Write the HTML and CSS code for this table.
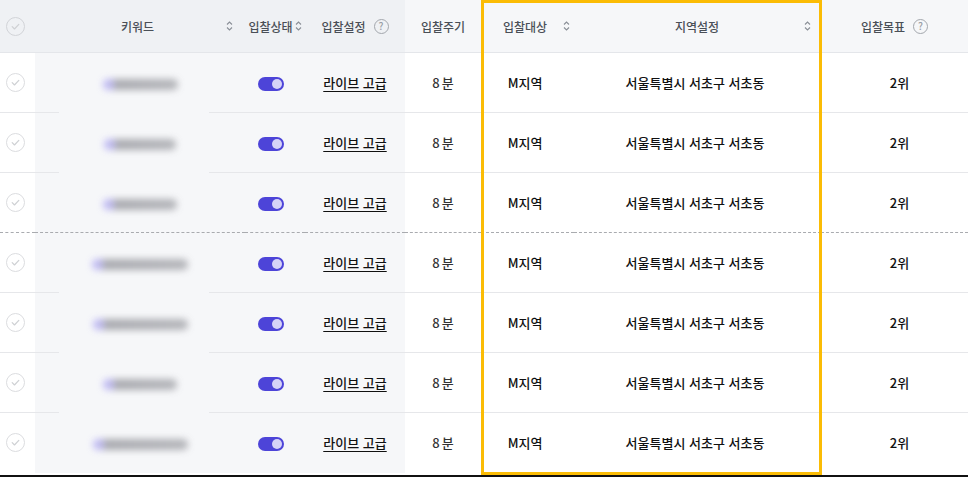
FILE: index.html
```html
<!DOCTYPE html>
<html lang="ko">
<head>
    <meta charset="UTF-8">
    <meta name="viewport" content="width=device-width, initial-scale=1.0">
    <title>입찰 키워드 목록</title>
    <link rel="stylesheet" href="styles.css">
</head>
<body>
    <div class="board">
        <table class="bid-table">
            <colgroup>
                <col class="c-check">
                <col class="c-kw">
                <col class="c-state">
                <col class="c-set">
                <col class="c-cycle">
                <col class="c-target">
                <col class="c-region">
                <col class="c-goal">
            </colgroup>
            <thead>
                <tr>
                    <th class="dark"><span class="circle"><svg viewBox="0 0 18 18"><path d="M5.5 9.2l2.4 2.4 4.6-4.8"/></svg></span></th>
                    <th class="dark"><div class="th-in kw-head"><span class="label">키워드</span><span class="sort"><svg viewBox="0 0 7 12"><path d="M1 4.5l2.5-2.5 2.5 2.5M1 7.5l2.5 2.5 2.5-2.5"/></svg></span></div></th>
                    <th class="dark"><div class="th-in tight"><span>입찰상태</span><span class="sort"><svg viewBox="0 0 7 12"><path d="M1 4.5l2.5-2.5 2.5 2.5M1 7.5l2.5 2.5 2.5-2.5"/></svg></span></div></th>
                    <th class="dark"><div class="th-in help"><span>입찰설정</span><span class="qmark">?</span></div></th>
                    <th><div class="th-in">입찰주기</div></th>
                    <th><div class="th-in target-head"><span>입찰대상</span><span class="sort"><svg viewBox="0 0 7 12"><path d="M1 4.5l2.5-2.5 2.5 2.5M1 7.5l2.5 2.5 2.5-2.5"/></svg></span></div></th>
                    <th><div class="th-in region-head"><span class="label">지역설정</span><span class="sort"><svg viewBox="0 0 7 12"><path d="M1 4.5l2.5-2.5 2.5 2.5M1 7.5l2.5 2.5 2.5-2.5"/></svg></span></div></th>
                    <th><div class="th-in help"><span>입찰목표</span><span class="qmark">?</span></div></th>
                </tr>
            </thead>
            <tbody id="rows"></tbody>
        </table>
        <div class="highlight"></div>
    </div>
    <div class="bottom-rule"></div>

    <script>
        // 블러 처리된 키워드 폭 (px)
        const widths = [75, 72, 74, 96, 95, 74, 95];
        const tbody = document.getElementById("rows");

        widths.forEach(function(w, i) {
            const tr = document.createElement("tr");
            if (i === 2) tr.className = "split";
            tr.innerHTML =
                '<td><span class="circle"><svg viewBox="0 0 18 18"><path d="M5.5 9.2l2.4 2.4 4.6-4.8"/></svg></span></td>' +
                '<td class="shade kw"><span class="blur" style="width:' + w + 'px"></span></td>' +
                '<td class="shade state"><span class="toggle"><i></i></span></td>' +
                '<td class="shade"><a class="link" href="#">라이브 고급</a></td>' +
                '<td class="num">8<span class="unit">분</span></td>' +
                '<td class="target">M지역</td>' +
                '<td class="region">서울특별시 서초구 서초동</td>' +
                '<td class="goal">2위</td>';
            tbody.appendChild(tr);
        });
    </script>
</body>
</html>
```

FILE: styles.css
```css
body, html {
    margin: 0;
    padding: 0;
    background: #fff;
    font-family: "Noto Sans CJK KR", "Noto Sans", sans-serif;
    overflow: hidden;
}

.board {
    position: relative;
    width: 968px;
}

.bid-table {
    width: 968px;
    table-layout: fixed;
    border-collapse: separate;
    border-spacing: 0;
}

.c-check { width: 35px; }
.c-kw { width: 210px; }
.c-state { width: 60px; }
.c-set { width: 100px; }
.c-cycle { width: 76px; }
.c-target { width: 93px; }
.c-region { width: 247px; }
.c-goal { width: 147px; }

/* 헤더 */
th {
    height: 52px;
    padding: 0;
    background: #f6f7f9;
    border-bottom: 1px solid #e4e6ea;
    font-size: 12px;
    font-weight: 500;
    color: #4a4f57;
    text-align: center;
}

th.dark {
    background: #eff1f4;
}

.th-in {
    display: flex;
    align-items: center;
    justify-content: center;
}

.th-in .label {
    flex: 1;
    text-align: center;
}

.kw-head {
    padding-left: 14px;
    padding-right: 12px;
}

.tight {
    gap: 2px;
}

.help {
    gap: 8px;
}

.target-head {
    justify-content: flex-start;
    padding-left: 22px;
    padding-right: 4px;
}

.target-head .sort {
    margin-left: auto;
}

.region-head {
    padding-left: 16px;
    padding-right: 10px;
}

.sort {
    display: inline-flex;
    width: 7px;
    height: 12px;
}

.sort svg {
    width: 7px;
    height: 12px;
    fill: none;
    stroke: #8a8f97;
    stroke-width: 1.1;
}

.qmark {
    display: inline-flex;
    align-items: center;
    justify-content: center;
    width: 13px;
    height: 13px;
    border: 1px solid #a3a7ad;
    border-radius: 50%;
    font-size: 10px;
    line-height: 1;
    color: #9a9ea5;
    font-weight: 500;
}

/* 체크 원 */
.circle {
    display: block;
    width: 17px;
    height: 17px;
    margin-left: 6px;
    border: 1px solid #dcdde0;
    border-radius: 50%;
    background: #fff;
}

.circle svg {
    width: 17px;
    height: 17px;
    fill: none;
    stroke: #cfd1d4;
    stroke-width: 1.3;
    stroke-linecap: round;
    stroke-linejoin: round;
}

th .circle {
    background: transparent;
    border-color: #d2d4d8;
}

/* 본문 */
td {
    height: 59px;
    padding: 0;
    border-bottom: 1px solid #e6e7ea;
    text-align: center;
    font-size: 13px;
    font-weight: 500;
    color: #111;
}

tr:last-child td {
    border-bottom-color: transparent;
}

tr.split td {
    border-bottom: 1px dashed #a9abaf;
}

td.shade {
    background-color: #f6f7f9;
}

td.kw {
    border-bottom-color: transparent;
    background-image:
        linear-gradient(#e6e7ea, #e6e7ea),
        linear-gradient(#e6e7ea, #e6e7ea);
    background-size: 24px 1px, 36px 1px;
    background-position: left bottom, right bottom;
    background-repeat: no-repeat;
    background-origin: border-box;
}

tr.split td.kw {
    border-bottom-color: #a9abaf;
    background-image: none;
}

tr:last-child td.kw {
    background-image: none;
}

.blur {
    display: inline-block;
    height: 11px;
    border-radius: 5px;
    background: linear-gradient(to right, #b6b0f2 0, #b6b0f2 9px, #9c9da3 12px, #a9aaaf 100%);
    filter: blur(3.5px);
    opacity: 0.85;
    vertical-align: middle;
}

td.state {
    padding-right: 8px;
}

.toggle {
    display: inline-flex;
    align-items: center;
    justify-content: flex-end;
    width: 26px;
    height: 14px;
    padding: 0 2px;
    box-sizing: border-box;
    border-radius: 7px;
    background: #4d44d8;
    vertical-align: middle;
}

.toggle i {
    width: 10px;
    height: 10px;
    border-radius: 50%;
    background: #d6d3f7;
}

.link {
    color: #111;
    text-decoration: underline;
    text-underline-offset: 3px;
    text-decoration-thickness: 1px;
}

.num {
    color: #333;
}

.unit {
    margin-left: 2px;
}

.target {
    padding-right: 5px;
}

.region {
    padding-right: 5px;
}

.goal {
    padding-left: 10px;
}

/* 강조 박스 */
.highlight {
    position: absolute;
    left: 481px;
    top: 0;
    width: 341px;
    height: 475px;
    box-sizing: border-box;
    border: 3px solid #fbbc05;
    pointer-events: none;
}

.bottom-rule {
    margin-top: 2px;
    height: 2px;
    background: #111;
}
```
